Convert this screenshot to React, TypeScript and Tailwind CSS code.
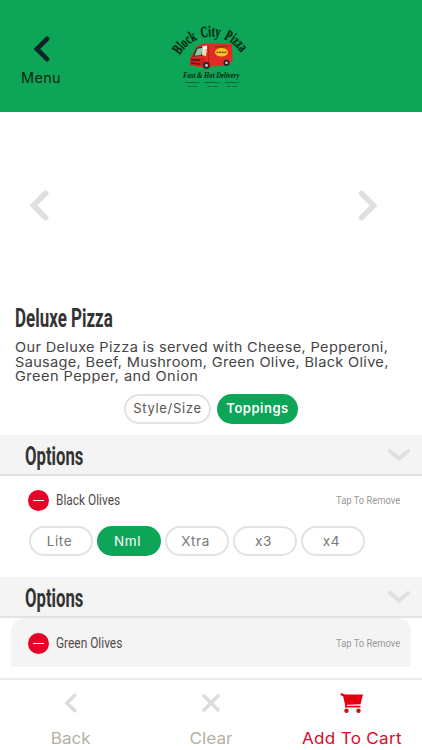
import clsx from 'clsx'

const AMOUNTS = ['Lite', 'Nml', 'Xtra', 'x3', 'x4']

const CHEVRON_PATHS = {
  left: 'M15 3 L4 14 L15 25',
  right: 'M4 3 L15 14 L4 25',
}

function Chevron({ dir, className }: { dir: 'left' | 'right'; className?: string }) {
  return (
    <svg viewBox="0 0 18 28" fill="none" stroke="currentColor" strokeWidth="5" strokeLinecap="round" strokeLinejoin="miter" className={className}>
      <path d={CHEVRON_PATHS[dir]} />
    </svg>
  )
}

function Logo() {
  return (
    <svg viewBox="0 0 80 72" className="h-[72px] w-[80px] overflow-visible">
      <path id="arc" d="M8.5 35.5 Q21 16.5 41 16.5 Q60 16.5 75 39" fill="none" />
      <text fontFamily="Liberation Serif, serif" fontSize="15.5" fontWeight="700" wordSpacing="3" fill="#06230f" stroke="#06230f" strokeWidth=".25">
        <textPath href="#arc" textLength="74" lengthAdjust="spacingAndGlyphs">Block City Pizza</textPath>
      </text>
      {/* van */}
      <g transform="translate(0 -2.5) scale(1 1.14)">
        <path d="M19.5 35 L26 25 L33 22.5 L59 23 L61 24 L61.5 38 L58 41 L34 44 L19 42 Z" fill="#e22b22" />
        <path d="M25.5 26.5 L36 24.5 L35.5 33 L21.5 34.5 Z" fill="#18392c" />
        <path d="M26.5 27.5 L32 26.5 L30 33 L23.5 33.5 Z" fill="#8fc8a0" />
        <path d="M31 28 Q34 25 36 29 L35 34 L31 33 Z" fill="#f6d7b0" />
        <path d="M31 25.5 L36 24.5 L36 28 L32 28 Z" fill="#fff" />
        <path d="M19 35 L34 35.5 L34 43 L19 41.5 Z" fill="#cc211d" />
        <path d="M20 37 L29 37.5 M20 40 L29 41" stroke="#4a1515" strokeWidth="1.1" />
        <path d="M37.5 25 V42" stroke="#a51a18" strokeWidth=".7" />
        <ellipse cx="50.5" cy="30.5" rx="6.5" ry="3.8" fill="#f4c51d" />
        <path d="M44 25.6 L57 25.2 M45.5 30.5 H55.5" stroke="#7c2a15" strokeWidth="1.1" strokeDasharray="2 .6" />
        <ellipse cx="35.5" cy="42" rx="3.3" ry="3" fill="#222" />
        <ellipse cx="35.5" cy="42" rx="1.6" ry="1.4" fill="#bbb" />
        <ellipse cx="55.5" cy="39.8" rx="3" ry="2.8" fill="#222" />
        <ellipse cx="55.5" cy="39.8" rx="1.5" ry="1.3" fill="#bbb" />
      </g>
      <g fontFamily="Liberation Serif, serif" fontWeight="700" fill="#06230f">
        <text x="12" y="58" fontSize="7.8" fontStyle="italic" textLength="56.5" lengthAdjust="spacingAndGlyphs">Fast &amp; Hot Delivery</text>
        <g fontSize="2.8" textAnchor="middle">
          <text x="21.5" y="63" textLength="15">Bridgeton, NJ</text>
          <text x="41.5" y="63" textLength="16.5">Millersburg, PA</text>
          <text x="61" y="63" textLength="14">Del Haven, NJ</text>
          <text x="21.5" y="67">455-4225</text>
          <text x="41.5" y="67">327-4222</text>
          <text x="61" y="67">327-4422</text>
        </g>
      </g>
    </svg>
  )
}

function SectionHeader() {
  return (
    <div className="flex h-[41px] items-center justify-between border-b-2 border-[#e2e2e2] bg-[#f4f4f4] pr-[11px] pl-[25px]">
      <h2 className="w-[58px] origin-left scale-x-[0.655] pt-[3px] font-[Roboto] text-[25.5px] leading-[40px] font-bold text-[#333]">Options</h2>
      <svg viewBox="0 0 24 14" fill="none" stroke="#e0e0e0" strokeWidth="4.2" strokeLinecap="round" className="h-[14px] w-6">
        <path d="M3 3 L12 10.5 L21 3" />
      </svg>
    </div>
  )
}

function ToppingRow({ name }: { name: string }) {
  return (
    <div className="flex h-[21px] items-center">
      <span className="flex size-[21px] items-center justify-center rounded-full bg-[#e90029]">
        <span className="h-px w-[11px] bg-white" />
      </span>
      <span className="ml-[6.5px] origin-left scale-x-[0.85] font-[Roboto] text-[14px] whitespace-nowrap text-[#54494a]">{name}</span>
      <span className="ml-auto origin-right scale-x-[0.81] font-[Roboto] text-[11.6px] whitespace-nowrap text-[#999]">Tap To Remove</span>
    </div>
  )
}

export default function App() {
  return (
    <div className="flex h-[750px] w-[422px] flex-col overflow-hidden bg-white font-[Inter,sans-serif] text-[#444]">
      <header className="grid h-[112px] shrink-0 grid-cols-3 bg-[#0da658]">
        <div className="flex w-[82px] flex-col items-center pt-[36px] text-[#0c2528]">
          <Chevron dir="left" className="h-[26px] w-[17px]" />
          <span className="mt-[6px] text-[14.5px] leading-5 tracking-[0.3px] text-[#08280f]">Menu</span>
        </div>
        <div className="flex justify-center pt-[20px]">
          <Logo />
        </div>
      </header>

      <div className="flex h-[188px] shrink-0 items-center justify-between pr-[45px] pl-[29px] text-[#dfdfdf]">
        <Chevron dir="left" className="-mt-px h-[31px] w-5" />
        <Chevron dir="right" className="-mt-px h-[31px] w-5" />
      </div>

      <section className="h-[135px] shrink-0">
        <h1 className="ml-[15px] origin-left scale-x-[0.665] pt-[2px] font-[Roboto] text-[25.5px] leading-[32px] font-bold text-[#333]">Deluxe Pizza</h1>
        <p className="mt-[6px] ml-[14.5px] w-max origin-left scale-x-[1.105] text-[13.2px] leading-[14.6px] whitespace-nowrap text-[#444]">
          <span className="block tracking-[0.3px]">Our Deluxe Pizza is served with Cheese, Pepperoni,</span>
          <span className="block tracking-[0.28px]">Sausage, Beef, Mushroom, Green Olive, Black Olive,</span>
          <span className="block tracking-[0.4px]">Green Pepper, and Onion</span>
        </p>
        <div className="mt-[10px] flex justify-center gap-[6px]">
          <button className="h-[30px] w-[87px] rounded-full border-2 border-[#e2e2e2] text-[13px] tracking-[0.7px] whitespace-nowrap text-[#555]">Style/Size</button>
          <button className="h-[30px] w-[81px] rounded-full bg-[#0da658] text-[13px] font-semibold tracking-[0.5px] text-white">Toppings</button>
        </div>
      </section>

      <SectionHeader />
      <section className="h-[101px] shrink-0 pt-[14px] pr-[22px] pl-[28px]">
        <ToppingRow name="Black Olives" />
        <div className="mt-[15px] ml-px flex gap-1">
          {AMOUNTS.map((amount) => (
            <button
              key={amount}
              className={clsx(
                'h-[30px] w-16 rounded-full pr-[3px] text-[13.5px] tracking-[0.6px]',
                amount === 'Nml' ? 'bg-[#0da658] text-white' : 'border-2 border-[#e2e2e2] text-[#777]',
              )}
            >
              {amount}
            </button>
          ))}
        </div>
      </section>

      <SectionHeader />
      <section className="h-[60px] shrink-0">
        <div className="mx-[11px] h-[49px] rounded-t-[14px] bg-[#f4f4f4] pt-[15px] pr-[11px] pl-[17px]">
          <ToppingRow name="Green Olives" />
        </div>
      </section>

      <footer className="grid flex-1 grid-cols-3 border-t-2 border-[#ececec] text-[16px] text-[#b4b2a3]">
        <div className="flex flex-col items-center pt-[13px]">
          <Chevron dir="left" className="h-[20px] w-[13px] text-[#dcdcdc]" />
          <span className="mt-[13px] origin-center scale-x-[1.07]">Back</span>
        </div>
        <div className="flex flex-col items-center pt-[13px]">
          <svg viewBox="0 0 20 20" stroke="#dcdcdc" strokeWidth="3.6" strokeLinecap="round" className="size-5">
            <path d="M3 3 L17 17 M17 3 L3 17" />
          </svg>
          <span className="mt-[13px] origin-center scale-x-[1.07]">Clear</span>
        </div>
        <div className="flex flex-col items-center pt-[13px] text-[#d90a2c]">
          <svg viewBox="0 0 24 20" fill="#e3000f" className="h-5 w-6">
            <path d="M1 0 L4.5 1.2 L5.2 1.4 H23 L20.5 11.2 L7 11.8 L6.5 12.8 H20.5 V14.6 H5 V11.5 L3.2 3.4 L.5 2 Z" />
            <circle cx="6.5" cy="17.8" r="2.2" />
            <circle cx="18.5" cy="17.8" r="2.2" />
          </svg>
          <span className="mt-[13px] origin-center scale-x-[1.065] whitespace-nowrap tracking-[0.3px]">Add To Cart</span>
        </div>
      </footer>
    </div>
  )
}
